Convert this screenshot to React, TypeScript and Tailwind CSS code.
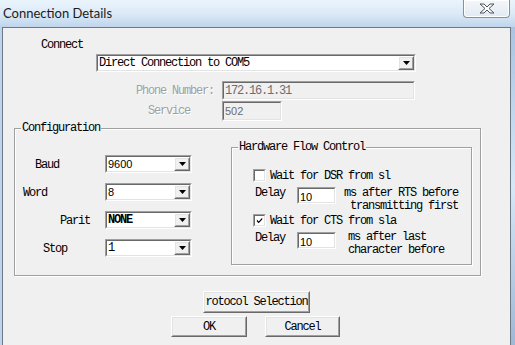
import type { ReactNode } from "react";

const mono = "font-['Liberation_Mono',monospace] text-[12px] tracking-[-1.2px] leading-[12px]";
const sans = "font-['Liberation_Sans',Arial,sans-serif] text-[11px] leading-[12px]";

function Sunken({ className = "", bg = "bg-white", children }: { className?: string; bg?: string; children?: ReactNode }) {
  return (
    <div className={`border border-t-[#a0a0a0] border-l-[#a0a0a0] border-r-white border-b-white ${className}`}>
      <div className={`flex h-full w-full items-center border border-t-[#696969] border-l-[#696969] border-r-[#e3e3e3] border-b-[#e3e3e3] ${bg}`}>
        {children}
      </div>
    </div>
  );
}

function Raised({ className = "", children }: { className?: string; children?: ReactNode }) {
  return (
    <div className={`border border-t-white border-l-white border-r-[#696969] border-b-[#696969] ${className}`}>
      <div className="flex h-full w-full items-center justify-center border border-t-[#e3e3e3] border-l-[#e3e3e3] border-r-[#a0a0a0] border-b-[#a0a0a0] bg-[#f0f0f0]">
        {children}
      </div>
    </div>
  );
}

function Combo({ className = "", value, font = mono }: { className?: string; value: string; font?: string }) {
  return (
    <Sunken className={className}>
      <span className={`flex-1 pl-[1px] text-black ${font}`}>{value}</span>
      <Raised className="h-full w-[16px]">
        <svg width="7" height="4" viewBox="0 0 7 4">
          <path d="M0 0h7L3.5 4z" fill="#000" />
        </svg>
      </Raised>
    </Sunken>
  );
}

function Check({ checked }: { checked?: boolean }) {
  return (
    <Sunken className="h-[13px] w-[13px] shrink-0">
      {checked && (
        <svg width="9" height="9" viewBox="0 0 9 9" className="ml-[1px]">
          <path d="M1 3.5l2 2 4-4v2l-4 4-2-2z" fill="#000" />
        </svg>
      )}
    </Sunken>
  );
}

function Group({ label, className = "", children }: { label: string; className?: string; children?: ReactNode }) {
  return (
    <div className={`relative border border-[#a0a0a0] shadow-[inset_1px_1px_0_#fff,1px_1px_0_#fff] ${className}`}>
      <span className={`absolute -top-[7px] left-[6px] bg-[#f0f0f0] px-[1px] text-black ${mono}`}>{label}</span>
      {children}
    </div>
  );
}

const rows = [
  { label: "Baud", pad: "pl-[20px]", value: "9600", font: sans },
  { label: "Word", pad: "pl-[8px]", value: "8", font: sans },
  { label: "Parit", pad: "pl-[45px]", value: "NONE", font: `${mono} font-bold` },
  { label: "Stop", pad: "pl-[28px]", value: "1", font: mono },
];

export default function App() {
  return (
    <div className="flex h-[345px] w-[515px] flex-col overflow-hidden bg-[#c4d9ee]">
      {/* title bar */}
      <div className="flex h-[27px] shrink-0 items-start justify-between bg-gradient-to-b from-[#eaf4fc] via-[#dceaf7] to-[#bfd5ec]">
        <span className="mt-[5px] pl-[3px] font-['Lato',sans-serif] text-[13px] leading-[17px] text-[#1b1b1b]">
          Connection Details
        </span>
        <div className="mr-[5px] flex h-[18px] w-[47px] items-center justify-center rounded-b-[4px] border border-t-0 border-[#8a9099] bg-gradient-to-b from-[#f4f7fb] to-[#e3eaf2] shadow-[inset_0_0_0_1px_#fff]">
          <svg width="16" height="11" viewBox="0 0 16 11">
            <path d="M1 1h4l3 3 3-3h4l-5 4.5 5 4.5h-4l-3-3-3 3H1l5-4.5z" fill="#fff" stroke="#4d535c" strokeWidth="1" strokeLinejoin="round" />
          </svg>
        </div>
      </div>

      <div className="flex flex-1">
        <div className="w-[2px] bg-[#bcd4ec]" />
        {/* client area */}
        <div className="flex w-[509px] flex-col border-t border-x border-[#6e7885] bg-[#f0f0f0]">
          <span className={`ml-[38px] mt-[11px] text-black ${mono}`}>Connect</span>

          <Combo className="ml-[93px] mt-[3px] h-[18px] w-[320px]" value="Direct Connection to COM5" />

          <div className="mt-[9px] flex h-[19px] items-center">
            <span className={`w-[211px] text-right text-[#a0a0a0] [text-shadow:1px_1px_0_#fff] ${mono}`}>Phone Number:</span>
            <Sunken className="ml-[8px] h-[19px] w-[193px]" bg="bg-[#f0f0f0]">
              <span className={`pl-[1px] text-[#6d6d6d] ${mono}`}>172.16.1.31</span>
            </Sunken>
          </div>

          <div className="mt-[1px] flex h-[20px] items-center">
            <span className={`w-[219px] pl-[145px] text-[#a0a0a0] [text-shadow:1px_1px_0_#fff] ${mono}`}>Service</span>
            <Sunken className="h-[20px] w-[60px]" bg="bg-[#f0f0f0]">
              <span className={`pl-[1px] text-[#6d6d6d] ${sans}`}>502</span>
            </Sunken>
          </div>

          <Group label="Configuration" className="ml-[11px] mt-[7px] flex h-[148px] w-[467px] items-start">
            <div className="flex w-[177px] flex-col gap-[10px] pt-[26px]">
              {rows.map((r) => (
                <div key={r.label} className="flex h-[18px] items-center">
                  <span className={`w-[90px] pt-[2px] ${r.pad} text-black ${mono}`}>{r.label}</span>
                  <Combo className="h-[18px] w-[87px]" value={r.value} font={r.font} />
                </div>
              ))}
            </div>

            <Group label="Hardware Flow Control" className="ml-[39px] mt-[18px] flex h-[118px] w-[241px] flex-col pl-[21px]">
              <div className="mt-[21px] flex h-[13px] items-center gap-[4px]">
                <Check />
                <span className={`text-black ${mono}`}>Wait for DSR from sl</span>
              </div>
              <div className="mt-[5px] flex items-start">
                <span className={`w-[44px] pl-[2px] text-black ${mono} leading-[13px]`}>Delay</span>
                <Sunken className="h-[17px] w-[39px]">
                  <span className={`pl-[1px] pt-[2px] text-black ${sans}`}>10</span>
                </Sunken>
                <span className={`ml-[8px] text-black ${mono} leading-[13px]`}>
                  ms after RTS before
                  <br />
                  &nbsp;transmitting first
                </span>
              </div>
              <div className="mt-[1px] flex h-[13px] items-center gap-[4px]">
                <Check checked />
                <span className={`text-black ${mono}`}>Wait for CTS from sla</span>
              </div>
              <div className="mt-[5px] flex items-start">
                <span className={`w-[44px] pl-[2px] text-black ${mono} leading-[13px]`}>Delay</span>
                <Sunken className="h-[17px] w-[39px]">
                  <span className={`pl-[1px] pt-[2px] text-black ${sans}`}>10</span>
                </Sunken>
                <span className={`-mt-[1px] ml-[12px] text-black ${mono} leading-[13px]`}>
                  ms after last
                  <br />
                  character before
                </span>
              </div>
            </Group>
          </Group>

          <Raised className="ml-[200px] mt-[15px] h-[22px] w-[107px]">
            <span className={`text-black ${mono}`}>rotocol Selection</span>
          </Raised>

          <div className="mt-[3px] flex">
            <Raised className="ml-[168px] h-[21px] w-[76px]">
              <span className={`text-black ${mono}`}>OK</span>
            </Raised>
            <Raised className="ml-[18px] h-[21px] w-[75px]">
              <span className={`text-black ${mono}`}>Cancel</span>
            </Raised>
          </div>
        </div>
        <div className="flex-1 bg-gradient-to-b from-[#a9c4e2] via-[#d6e8f8] to-[#9fb8d6]" />
      </div>
    </div>
  );
}
